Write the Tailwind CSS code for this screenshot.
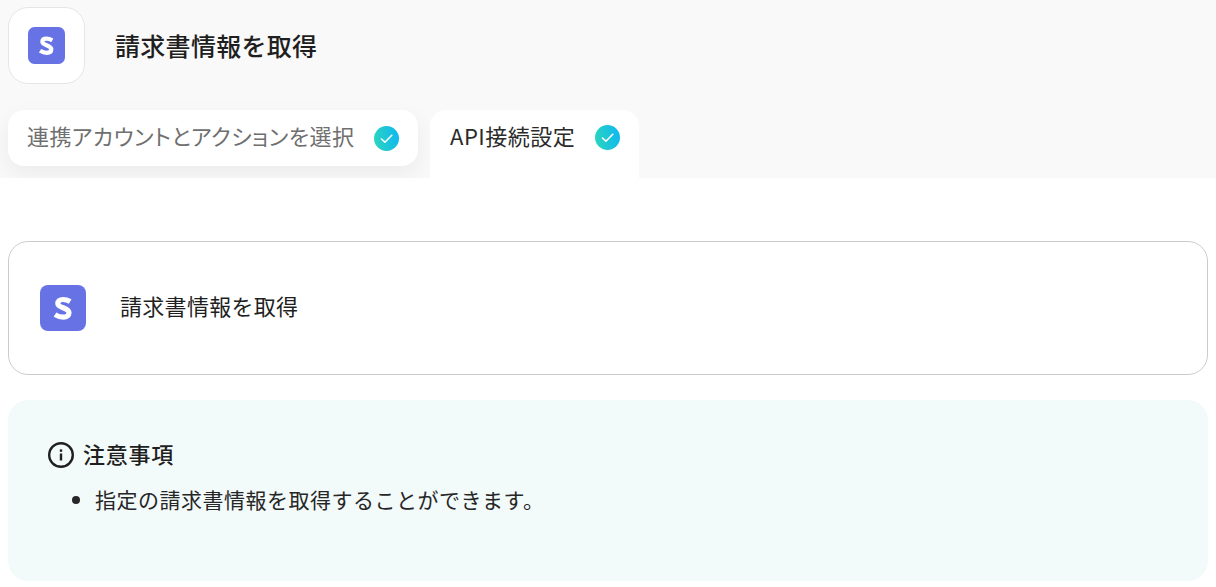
<!DOCTYPE html>
<html lang="ja">
  <head>
    <meta charset="UTF-8" />
    <meta name="viewport" content="width=device-width, initial-scale=1.0" />
    <title>請求書情報を取得</title>
    <script src="https://cdn.jsdelivr.net/npm/@tailwindcss/browser@4"></script>
  </head>
  <body class="bg-white font-['Noto_Sans_CJK_JP','Noto_Sans',sans-serif] text-[#1f1f1f] overflow-hidden">
    <!-- ヘッダー -->
    <div class="h-[178px] bg-[#f9f9f9] px-2 pt-[7px] overflow-hidden">
      <div class="flex items-center">
        <div class="w-[77px] h-[77px] rounded-[20px] bg-white border border-[#e6e6e6] flex items-center justify-center pr-px pb-px">
          <svg class="w-[37px] h-[37px]" viewBox="0 0 46 46">
            <rect width="46" height="46" rx="8" fill="#6772e5" />
            <path d="M30.200 16.600C27.800 15.200 25.400 14.500 23 14.500C19.800 14.500 17.800 16 17.800 18.400C17.800 23.200 29 22.300 29 27.800C29 30.500 26.800 32.200 23.400 32.200C20.500 32.200 17.600 31.200 15 29.600" fill="none" stroke="#fff" stroke-width="5.200" />
          </svg>
        </div>
        <h1 class="ml-[30px] -mt-px text-[25px] leading-none font-medium tracking-[0.3px]">請求書情報を取得</h1>
      </div>
      <div class="flex gap-3 mt-[26px] items-start">
        <div class="w-[410px] h-[56px] rounded-2xl bg-white shadow-[0_8px_22px_rgba(0,0,0,0.06)] flex items-center justify-between pl-[19px] pr-[19px]">
          <span class="text-[22px] leading-[30px] -mt-[6px] [font-feature-settings:'palt'] tracking-[0.45px] text-[#6f6f6f] whitespace-nowrap">連携アカウントとアクションを選択</span>
          <svg class="w-[25px] h-[25px] shrink-0" viewBox="0 0 25 25">
            <defs>
              <linearGradient id="check1" x1="0" y1="0.6" x2="1" y2="0.4">
                <stop offset="0" stop-color="#2bd4bf" />
                <stop offset="1" stop-color="#0fb8ef" />
              </linearGradient>
            </defs>
            <circle cx="12.500" cy="12.500" r="12.500" fill="url(#check1)" />
            <path d="M7.500 13l3.400 3.200 6.900-6.900" fill="none" stroke="#fff" stroke-width="1.600" stroke-linecap="round" stroke-linejoin="round" />
          </svg>
        </div>
        <div class="w-[209px] h-[68px] rounded-t-2xl bg-white flex items-start justify-between pl-5 pr-[19px] pt-[11px]">
          <span class="text-[22px] leading-[28px] tracking-[0.5px] text-[#2b2b2b] whitespace-nowrap">API接続設定</span>
          <svg class="w-[25px] h-[25px] shrink-0 mt-1" viewBox="0 0 25 25">
            <circle cx="12.500" cy="12.500" r="12.500" fill="url(#check1)" />
            <path d="M7.500 13l3.400 3.200 6.900-6.900" fill="none" stroke="#fff" stroke-width="1.600" stroke-linecap="round" stroke-linejoin="round" />
          </svg>
        </div>
      </div>
    </div>

    <div class="px-2">
      <!-- アクションカード -->
      <div class="mt-[63px] h-[134px] rounded-[20px] border border-[#cccccc] flex items-center pl-[31px]">
        <svg class="w-[46px] h-[46px]" viewBox="0 0 46 46">
          <rect width="46" height="46" rx="8" fill="#6772e5" />
          <path d="M30.200 16.600C27.800 15.200 25.400 14.500 23 14.500C19.800 14.500 17.800 16 17.800 18.400C17.800 23.200 29 22.300 29 27.800C29 30.500 26.800 32.200 23.400 32.200C20.500 32.200 17.600 31.200 15 29.600" fill="none" stroke="#fff" stroke-width="5.200" />
        </svg>
        <span class="ml-[34px] -mt-[6px] text-[22px] tracking-[0.3px]">請求書情報を取得</span>
      </div>

      <!-- 注意事項 -->
      <div class="mt-[25px] h-[181px] rounded-[20px] bg-[#f3fafa] pl-[40px] pt-[42px]">
        <div class="flex items-center gap-[9px]">
          <svg class="w-[26px] h-[26px]" viewBox="0 0 26 26" fill="none">
            <circle cx="13" cy="13" r="11.800" stroke="#1f1f1f" stroke-width="2.400" />
            <rect x="11.800" y="11.500" width="2.400" height="7" fill="#1f1f1f" />
            <rect x="11.800" y="7.400" width="2.400" height="2.400" fill="#1f1f1f" />
          </svg>
          <span class="text-[22px] leading-[30px] -mt-1 font-medium tracking-[0.75px]">注意事項</span>
        </div>
        <ul class="list-disc pl-[47px] mt-[16px] text-[#262626]">
          <li class="text-[21px] leading-[30px] tracking-[0.5px]">指定の請求書情報を取得することができます。</li>
        </ul>
      </div>
    </div>
  </body>
</html>
